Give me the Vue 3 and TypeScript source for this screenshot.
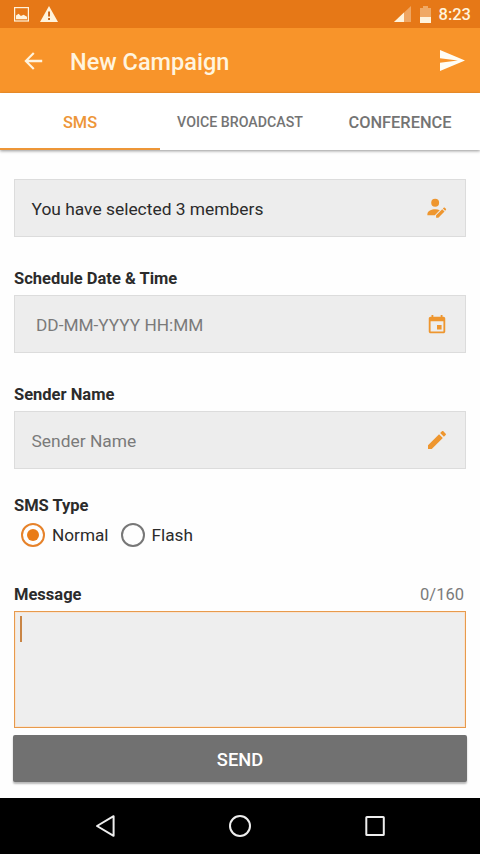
<script setup lang="ts">
import { computed, ref } from 'vue'

type SmsType = 'Normal' | 'Flash'

const tabs = [
  { label: 'SMS', compact: false },
  { label: 'VOICE BROADCAST', compact: true },
  { label: 'CONFERENCE', compact: false },
]
const smsTypes: SmsType[] = ['Normal', 'Flash']

const activeTab = ref(0)
const memberCount = ref(3)
const smsType = ref<SmsType>('Normal')
const message = ref('')
const maxLength = 160
const counter = computed(() => `${message.value.length}/${maxLength}`)
</script>

<template>
  <div class="screen">
    <div class="status">
      <svg class="status-image" viewBox="0 0 15 15">
        <rect x="0.6" y="0.6" width="13.8" height="13.4" fill="none" stroke="currentColor" stroke-width="1.2" />
        <path d="M2 12.300V8.500l2.600-1.700 2.300 2.300L9.600 7.700 13 9.800v2.500z" fill="currentColor" />
      </svg>
      <svg class="status-alert" viewBox="0 0 18 16">
        <path d="M9 0 18 16H0z" fill="currentColor" />
        <path d="M8.100 5.600h1.900v4.800H8.100zM8.100 12h1.900v2H8.100z" fill="#c86414" />
      </svg>
      <span class="spacer"></span>
      <svg class="status-signal" viewBox="0 0 17 16">
        <path d="M17 0v16H0z" fill="currentColor" opacity="0.38" />
        <path d="M10 6.600V16H0z" fill="currentColor" />
      </svg>
      <svg class="status-battery" viewBox="0 0 11 17">
        <path d="M3 0h5v2h3v9H0V2h3z" fill="currentColor" opacity="0.4" />
        <path d="M0 11h11v6H0z" fill="currentColor" />
      </svg>
      <span class="clock">8:23</span>
    </div>

    <header class="appbar">
      <svg class="back" viewBox="0 0 24 24">
        <path d="M20.500 10.900H7.830l5.590-5.490L12 4l-8 8 8 8 1.410-1.410L7.830 13.100H20.500z" fill="currentColor" />
      </svg>
      <h1 class="title">New Campaign</h1>
      <svg class="send-icon" viewBox="2 3 21 18" preserveAspectRatio="none">
        <path d="M2.010 21 23 12 2.010 3 2 10l15 2-15 2z" fill="currentColor" />
      </svg>
    </header>

    <nav class="tabs">
      <button
        v-for="(tab, i) in tabs"
        :key="tab.label"
        type="button"
        class="tab"
        :class="{ active: i === activeTab, compact: tab.compact }"
        @click="activeTab = i"
      >
        {{ tab.label }}
      </button>
    </nav>

    <main class="form">
      <div class="field">
        <span class="value">You have selected {{ memberCount }} members</span>
        <svg class="field-icon" viewBox="0 0 24 24">
          <circle cx="10" cy="6.300" r="4.300" />
          <path d="M1.500 19.800v-1.200c0-3.300 4.500-5.200 8.700-5.200 1.800 0 3.300.3 4.800 1l-5.400 5.400z" />
          <path d="m11 20 6.700-6.700 2.500 2.500-6.700 6.700H11zM18.400 12.600l.9-.9c.4-.4.9-.4 1.200 0l1.200 1.200c.4.400.4.900 0 1.200l-.9.900z" />
        </svg>
      </div>

      <h2 class="label">Schedule Date &amp; Time</h2>
      <div class="field">
        <span class="value hint date">DD-MM-YYYY HH:MM</span>
        <svg class="field-icon calendar" viewBox="0 0 24 24">
          <path d="M17 12h-5v5h5zM16 1v2H8V1H6v2H5c-1.110 0-1.990.9-1.990 2L3 19c0 1.100.89 2 2 2h14c1.100 0 2-.9 2-2V5c0-1.100-.9-2-2-2h-1V1zm3 18H5V8h14z" />
        </svg>
      </div>

      <h2 class="label">Sender Name</h2>
      <div class="field">
        <span class="value hint">Sender Name</span>
        <svg class="field-icon pencil" viewBox="0 0 24 24">
          <path d="M3 17.250V21h3.750L17.810 9.940l-3.750-3.750zM20.710 7.040c.39-.39.39-1.020 0-1.410l-2.340-2.340c-.39-.39-1.020-.39-1.410 0l-1.830 1.830 3.750 3.750z" />
        </svg>
      </div>

      <h2 class="label type-label">SMS Type</h2>
      <div class="radios">
        <button
          v-for="option in smsTypes"
          :key="option"
          type="button"
          class="radio"
          :class="{ checked: option === smsType }"
          @click="smsType = option"
        >
          <span class="ring"><span v-if="option === smsType" class="dot"></span></span>
          <span>{{ option }}</span>
        </button>
      </div>

      <div class="message-head">
        <h2 class="message-title">Message</h2>
        <span class="counter">{{ counter }}</span>
      </div>
      <div class="message"><span class="caret"></span></div>

      <button type="button" class="submit">SEND</button>
    </main>

    <footer class="navbar">
      <svg viewBox="0 0 24 24"><path d="M20.600 2.200v19.600L4 12z" /></svg>
      <svg viewBox="0 0 24 24"><circle cx="12" cy="12" r="10" /></svg>
      <svg viewBox="0 0 24 24"><rect x="3.300" y="3" width="17.500" height="18" rx="0.6" /></svg>
    </footer>
  </div>
</template>

<style>
body {
  margin: 0;
  background: #fff;
}
</style>

<style scoped>
.screen {
  display: flex;
  flex-direction: column;
  width: 480px;
  height: 854px;
  overflow: hidden;
  background: #fefefe;
  color: #2b2b2b;
  font-family: Roboto, "Liberation Sans", sans-serif;
}
button {
  margin: 0;
  padding: 0;
  border: 0;
  background: none;
  color: inherit;
  font-family: inherit;
}
h1,
h2 {
  margin: 0;
}
svg {
  display: block;
  flex: none;
}
.spacer {
  flex: 1;
}
.status {
  display: flex;
  align-items: center;
  flex: none;
  height: 28px;
  padding: 0 9px 0 14px;
  box-sizing: border-box;
  background: #e67817;
  color: #fff3dc;
}
.status-image {
  width: 15px;
  height: 15px;
}
.status-alert {
  width: 18px;
  height: 16px;
  margin-left: 11px;
}
.status-signal {
  width: 17px;
  height: 16px;
}
.status-battery {
  width: 11px;
  height: 17px;
  margin-left: 9px;
}
.clock {
  margin-left: 8px;
  font-size: 16.500px;
  font-weight: 500;
  line-height: 28px;
  padding-top: 2px;
}
.appbar {
  display: flex;
  align-items: center;
  flex: none;
  height: 65px;
  padding: 0 15px 0 20px;
  box-sizing: border-box;
  background: #f8942a;
  color: #fff4df;
}
.back {
  width: 26px;
  height: 26px;
}
.title {
  flex: 1;
  margin-left: 24px;
  font-size: 23.500px;
  font-weight: 500;
  line-height: 30px;
  padding-top: 3px;
}
.send-icon {
  width: 25px;
  height: 21px;
  margin-top: -1px;
  color: #fffdf5;
}
.tabs {
  display: grid;
  grid-template-columns: repeat(3, 1fr);
  flex: none;
  height: 57px;
  background: #fff;
  box-shadow: 0 1px 3px rgba(0, 0, 0, 0.42);
}
.tab {
  padding-top: 3px;
  border-bottom: 2px solid transparent;
  color: #747474;
  font-size: 16.400px;
  font-weight: 500;
}
.tab.compact {
  font-size: 14.200px;
}
.tab.active {
  border-bottom-color: #ed9638;
  color: #ed9638;
}
.form {
  display: flex;
  flex-direction: column;
  flex: 1;
  padding: 29px 14px 0;
}
.field {
  display: flex;
  align-items: center;
  justify-content: space-between;
  flex: none;
  height: 58px;
  padding: 0 17px 0 16px;
  box-sizing: border-box;
  border: 1px solid #dcdcdc;
  background: #ededed;
}
.value {
  font-size: 17.400px;
  line-height: 24px;
  padding: 2px 0 0 0.5px;
}
.hint {
  color: #7a7a7a;
}
.date {
  padding-left: 5px;
  font-size: 17.250px;
}
.field-icon {
  width: 22px;
  height: 22px;
  fill: #ee962f;
}
.calendar {
  margin-top: 2px;
}
.pencil {
  width: 24px;
  height: 24px;
  margin-right: -1px;
}
.label {
  flex: none;
  height: 32px;
  margin-top: 26px;
  font-size: 16.500px;
  font-weight: 700;
  line-height: 32px;
}
.type-label {
  height: 31px;
  margin-top: 21px;
}
.radios {
  display: flex;
  align-items: center;
  flex: none;
  gap: 12px;
  height: 27px;
  padding-left: 7px;
}
.radio {
  display: flex;
  align-items: center;
  gap: 7px;
  font-size: 17.200px;
}
.ring {
  display: flex;
  align-items: center;
  justify-content: center;
  width: 24px;
  height: 24px;
  box-sizing: border-box;
  border: 2px solid #777;
  border-radius: 50%;
}
.checked .ring {
  border-color: #e6822a;
}
.dot {
  width: 12px;
  height: 12px;
  border-radius: 50%;
  background: #e97c18;
}
.message-head {
  display: flex;
  justify-content: space-between;
  flex: none;
  height: 33px;
  margin-top: 30px;
  padding-right: 2px;
  line-height: 33px;
}
.message-title {
  font-size: 16.500px;
  font-weight: 700;
}
.counter {
  color: #7a7a7a;
  font-size: 16.500px;
}
.message {
  flex: none;
  height: 117px;
  padding: 4px;
  box-sizing: border-box;
  border: 1px solid #e79a4c;
  background: #eee;
  box-shadow: inset 0 0 0 1px #f8e4d2;
}
.caret {
  display: block;
  width: 2px;
  height: 26px;
  margin-left: 1px;
  background: #c98545;
}
.submit {
  flex: none;
  height: 47px;
  margin: 7px -1px 0;
  padding-top: 1px;
  border-radius: 2px;
  background: #717171;
  box-shadow: 0 2px 2px rgba(0, 0, 0, 0.28);
  color: #fff;
  font-size: 18.300px;
  font-weight: 500;
}
.navbar {
  display: flex;
  align-items: center;
  justify-content: center;
  flex: none;
  gap: 111px;
  height: 56px;
  background: #000;
}
.navbar svg {
  width: 24px;
  height: 24px;
  fill: none;
  stroke: #eee;
  stroke-width: 2;
  stroke-linejoin: round;
}
</style>
